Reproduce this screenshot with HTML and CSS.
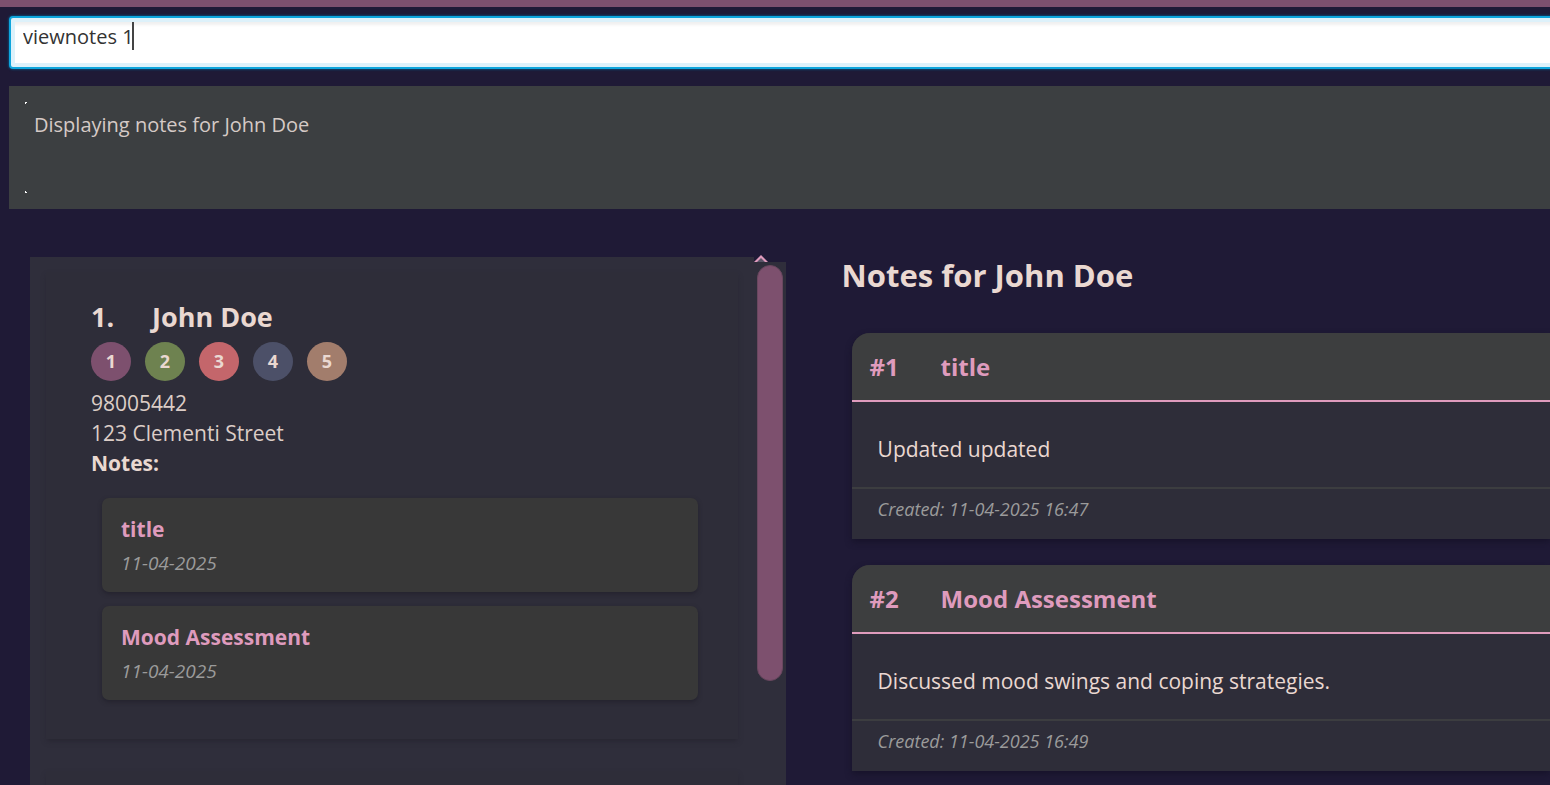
FILE: index.html
```html
<!DOCTYPE html>
<html lang="en">
<head>
<meta charset="utf-8">
<title>Client notes</title>
<link rel="stylesheet" href="styles.css">
</head>
<body>
<div class="app">
  <div class="menu-strip"></div>
  <div class="command">
    <input class="command-input" type="text" aria-label="Command" value="viewnotes 1">
    <span class="caret"></span>
  </div>
  <div class="result">
    <span class="corner corner-top"></span>
    <output class="result-text">Displaying notes for John Doe</output>
    <span class="corner corner-bottom"></span>
  </div>
  <main class="content">
    <section class="clients">
      <div class="client-list">
        <article class="client">
          <h2 class="client-name"><span class="client-index">1.</span><span>John Doe</span></h2>
          <div class="tags">
            <span class="tag tag-plum">1</span>
            <span class="tag tag-green">2</span>
            <span class="tag tag-red">3</span>
            <span class="tag tag-slate">4</span>
            <span class="tag tag-tan">5</span>
          </div>
          <p class="detail">98005442</p>
          <p class="detail">123 Clementi Street</p>
          <p class="detail detail-strong">Notes:</p>
          <div class="previews">
            <div class="preview">
              <h3 class="preview-title">title</h3>
              <time class="preview-date">11-04-2025</time>
            </div>
            <div class="preview">
              <h3 class="preview-title">Mood Assessment</h3>
              <time class="preview-date">11-04-2025</time>
            </div>
          </div>
        </article>
        <article class="client"></article>
      </div>
      <div class="scroll">
        <svg class="scroll-arrow" width="14" height="7" viewBox="0 0 14 7"><path d="M0 7 L7 0 L14 7 Z" fill="#df9bbd"/><path d="M3 7 L7 3 L11 7 Z" fill="#5a5468"/></svg>
        <div class="scroll-track"><div class="scroll-thumb"></div></div>
      </div>
    </section>
    <section class="notes">
      <h1 class="notes-heading">Notes for John Doe</h1>
      <div class="note-list">
        <article class="note">
          <h2 class="note-head"><span class="note-number">#1</span><span>title</span></h2>
          <p class="note-body">Updated updated</p>
          <p class="note-foot">Created: 11-04-2025 16:47</p>
        </article>
        <article class="note">
          <h2 class="note-head"><span class="note-number">#2</span><span>Mood Assessment</span></h2>
          <p class="note-body">Discussed mood swings and coping strategies.</p>
          <p class="note-foot">Created: 11-04-2025 16:49</p>
        </article>
      </div>
    </section>
  </main>
</div>
</body>
</html>
```

FILE: styles.css
```css
* { box-sizing: border-box; }

body, h1, h2, h3, p { margin: 0; }

body {
  background: #1f1a36;
  color: #ead8d1;
  font-family: "Segoe UI", "Open Sans", "Noto Sans", sans-serif;
  font-size: 21px;
  line-height: 30px;
}

.app {
  display: flex;
  flex-direction: column;
  height: 100vh;
  overflow: hidden;
}

.menu-strip {
  flex: none;
  height: 7px;
  background: #7d506e;
}

.command {
  position: relative;
  flex: none;
  margin: 9px -8px 0 9px;
}

.command-input {
  display: block;
  width: 100%;
  height: 53px;
  padding: 0 12px 12px;
  border: 2px solid #0ea5dc;
  border-radius: 4px;
  outline: none;
  background: #fff;
  box-shadow: 0 0 2px 1px #10436b, inset 0 0 0 4px #ddf1fa, inset 0 8px 3px -1px #f0f0f0;
  color: #333;
  font: inherit;
  font-size: 20px;
}

.caret {
  position: absolute;
  left: 123px;
  top: 6px;
  width: 2px;
  height: 28px;
  background: #444;
}

.result {
  position: relative;
  flex: none;
  height: 123px;
  margin: 17px 0 0 9px;
  padding: 24px 25px;
  background: #3c3f41;
}

.result-text {
  display: block;
  color: #d5cac6;
  font-size: 20px;
}

.corner {
  position: absolute;
  left: 16px;
  width: 3px;
  height: 3px;
}

.corner-top {
  top: 16px;
  background: linear-gradient(135deg, #fff 40%, transparent 50%);
}

.corner-bottom {
  bottom: 16px;
  background: linear-gradient(45deg, #fff 40%, transparent 50%);
}

.content {
  flex: 1;
  display: grid;
  grid-template-columns: 16fr 15fr;
  column-gap: 56px;
  min-height: 0;
  padding: 48px 0 0 30px;
}

.clients {
  display: flex;
  min-width: 0;
  min-height: 0;
}

.client-list {
  flex: 1;
  display: flex;
  flex-direction: column;
  gap: 32px;
  padding: 15px 16px 0;
  overflow: hidden;
  background: #2f2e3b;
}

.client {
  flex: none;
  min-height: 200px;
  padding: 25px 40px 39px 45px;
  background: #2e2d39;
  box-shadow: 0 3px 5px -1px #272631;
}

.client-name {
  display: flex;
  font-size: 27px;
  line-height: 40px;
}

.client-index { width: 61px; }

.tags {
  display: flex;
  gap: 14px;
  margin: 5px 0 7px;
}

.tag {
  width: 40px;
  height: 39px;
  border-radius: 50%;
  font-size: 18px;
  font-weight: 700;
  line-height: 38px;
  text-align: center;
}

.tag-plum { background: #7d506e; }
.tag-green { background: #6e8250; }
.tag-red { background: #c4666b; }
.tag-slate { background: #4c5068; }
.tag-tan { background: #a27d6c; }

.detail { color: #dccdc7; }

.detail-strong {
  color: #ead8d1;
  font-weight: 700;
}

.previews {
  display: flex;
  flex-direction: column;
  gap: 14px;
  margin: 20px 0 0 11px;
}

.preview {
  padding: 15px 19px 11px;
  border-radius: 7px;
  background: #383838;
  box-shadow: 0 2px 4px #24232e;
}

.preview-title {
  color: #df9bbd;
  font-size: 21px;
  line-height: 32px;
}

.preview-date {
  display: block;
  color: #9b9b9b;
  font-size: 19px;
  font-style: italic;
  line-height: 36px;
  white-space: nowrap;
}

.scroll {
  display: flex;
  flex-direction: column;
  width: 32px;
}

.scroll-arrow {
  flex: none;
  margin-top: -2px;
}

.scroll-track {
  flex: 1;
  padding: 3px;
  background: #2f2e3b;
}

.scroll-thumb {
  height: 80.5%;
  border: 1px solid #69475f;
  border-radius: 13px;
  background: #7d506e;
}

.notes { min-width: 0; }

.notes-heading {
  font-size: 31px;
  line-height: 36px;
}

.note-list {
  display: flex;
  flex-direction: column;
  gap: 26px;
  margin: 40px 0 0 10px;
}

.note {
  border-radius: 18px 0 0 0;
  background: #2e2d39;
  box-shadow: 0 3px 6px #17132a;
}

.note-head {
  display: flex;
  padding: 18px 18px 17px;
  border-bottom: 2px solid #df9bbd;
  border-radius: 18px 0 0 0;
  background: #3d3e3f;
  color: #df9bbd;
  font-size: 24px;
  line-height: 32px;
}

.note-number { width: 71px; }

.note-body {
  padding: 32px 26px 23px;
}

.note-foot {
  padding: 5px 26px 15px;
  border-top: 2px solid #3c3d40;
  color: #9b9b9b;
  font-size: 18px;
  font-style: italic;
}
```
